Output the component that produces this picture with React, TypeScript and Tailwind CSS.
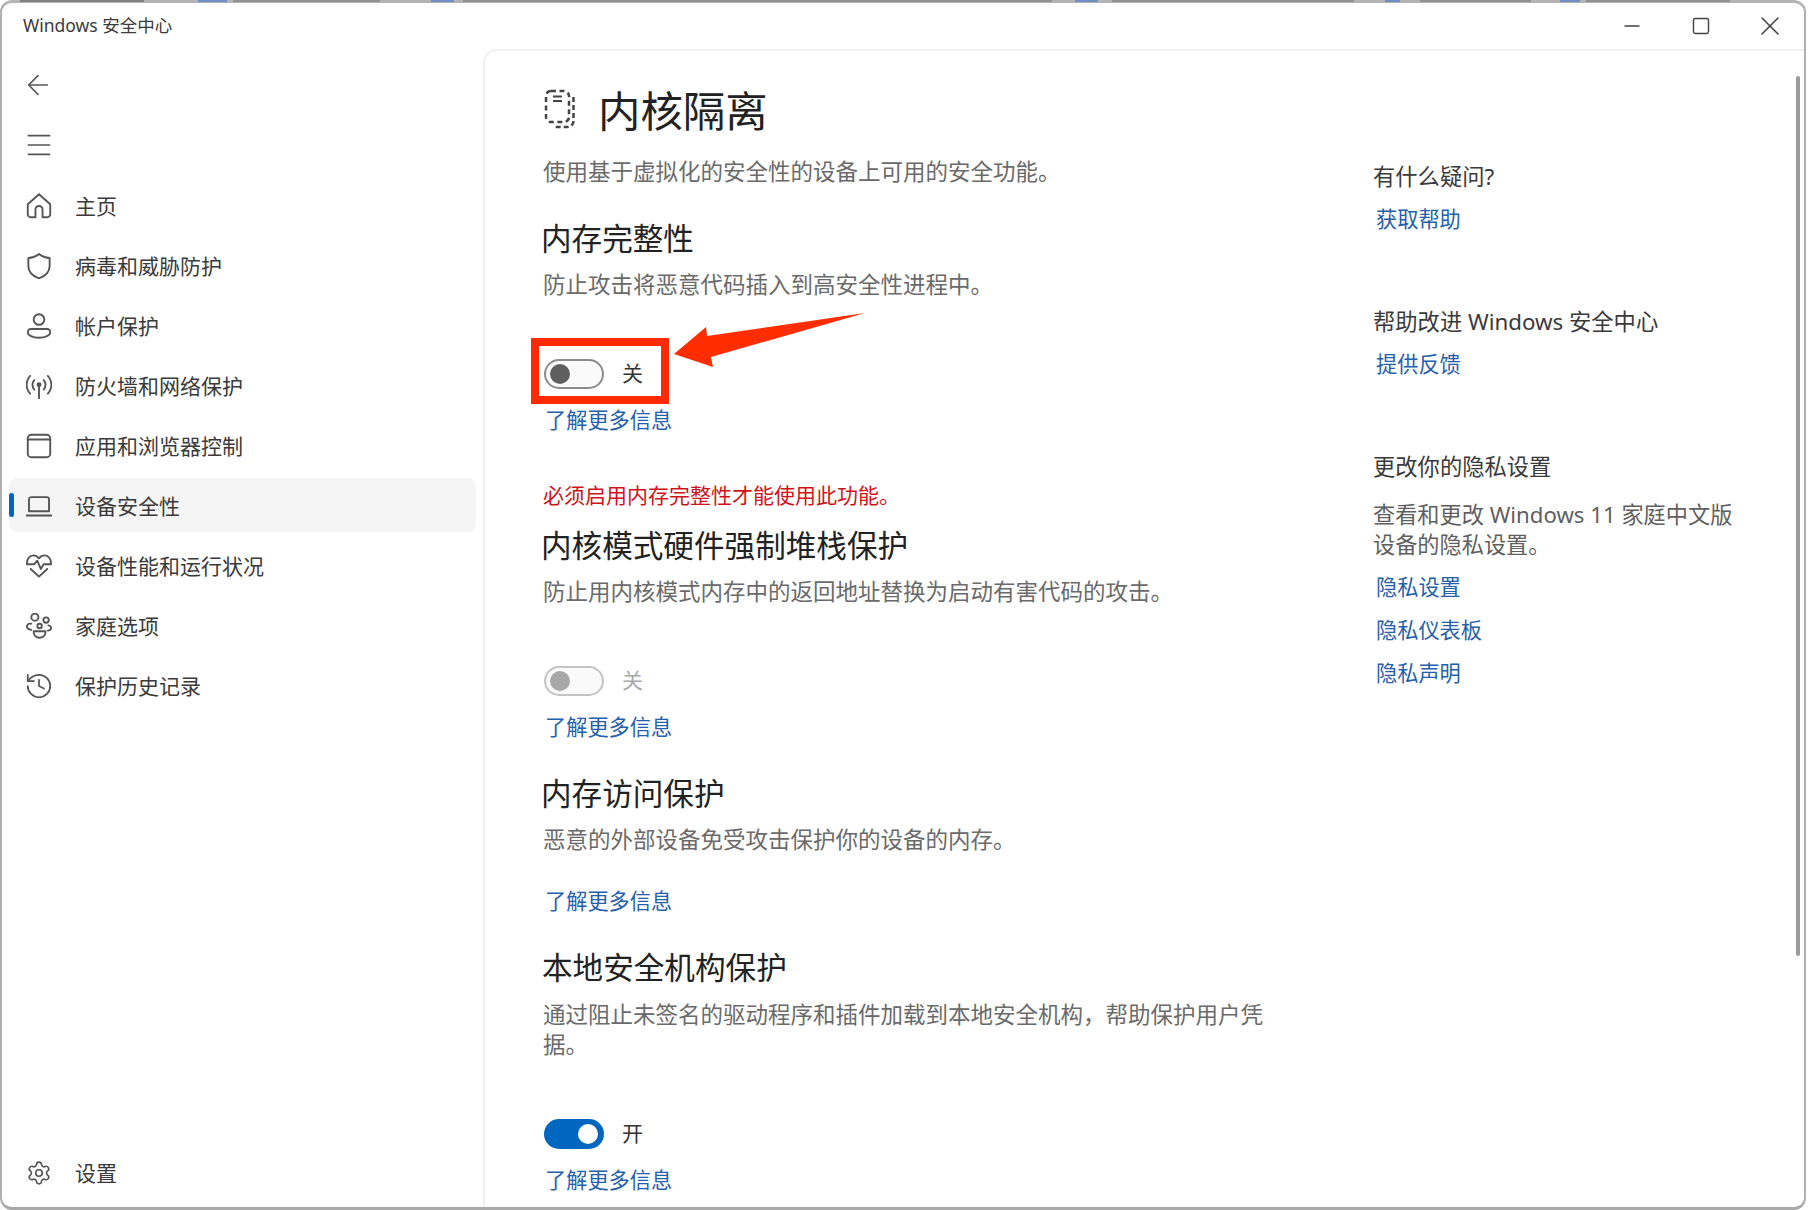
import { ArrowLeft, History, Menu, Settings, Minus, Square, X } from "lucide-react";
import type { ReactNode } from "react";

const ICON = "h-[26px] w-[26px] flex-none text-[#555]";

function Svg({ children }: { children: ReactNode }) {
  return (
    <svg viewBox="1 1 22 22" fill="none" stroke="currentColor" strokeWidth="1.6" strokeLinecap="round" strokeLinejoin="round" className={ICON}>
      {children}
    </svg>
  );
}

const HomeIcon = () => (
  <Svg>
    <path d="M2.500 10.500 12 2l9.500 8.500V19a2.500 2.500 0 0 1-2.500 2.500h-4V15a3 3 0 0 0-6 0v6.500H5A2.500 2.500 0 0 1 2.500 19Z" />
  </Svg>
);
const ShieldIcon = () => (
  <Svg>
    <path d="M12 1.800c2.600 2.200 5.600 3.300 9 3.400V12c0 4.800-3.400 8.400-9 10.400C6.400 20.400 3 16.800 3 12V5.200c3.400-.1 6.400-1.200 9-3.400Z" />
  </Svg>
);
const PersonIcon = () => (
  <Svg>
    <circle cx="12" cy="6.500" r="4.500" />
    <path d="M5 14.500h14a2.500 2.500 0 0 1 2.500 2.500c0 3-4.200 5-9.500 5s-9.500-2-9.500-5A2.500 2.500 0 0 1 5 14.500Z" />
  </Svg>
);
const AntennaIcon = () => (
  <Svg>
    <circle cx="12" cy="11" r="1.300" fill="currentColor" />
    <path d="M12 12.500V22.500" />
    <path d="M8 7a6 6 0 0 0 0 8M16 7a6 6 0 0 1 0 8" />
    <path d="M4.500 3.500a11 11 0 0 0 0 15M19.500 3.500a11 11 0 0 1 0 15" />
  </Svg>
);
const WindowIcon = () => (
  <Svg>
    <rect x="2.500" y="2.500" width="19" height="19" rx="3" />
    <path d="M2.500 6.500h19" />
  </Svg>
);
const LaptopIcon = () => (
  <Svg>
    <path d="M3.500 16.500V6.500a2 2 0 0 1 2-2h13a2 2 0 0 1 2 2v10Z" />
    <path d="M1.500 20h21" />
  </Svg>
);
const HeartIcon = () => (
  <Svg>
    <path d="M5 14.500 12 21l7-6.500" />
    <path d="M2 10.500C1.300 6.500 4 3 7.300 3c2 0 3.600 1 4.700 2.500C13.100 4 14.700 3 16.700 3 20 3 22.700 6.500 22 10.500" />
    <path d="M2 10.500h6l2.500-3 3 7 2.500-4h6" />
  </Svg>
);
const FamilyIcon = () => (
  <Svg>
    <circle cx="8.500" cy="4.500" r="3" />
    <circle cx="18" cy="7" r="2.300" />
    <circle cx="12.500" cy="12" r="1.900" />
    <path d="M5.500 10H4a2.500 2.500 0 0 0-2 3.500c.5 1 1.700 1.600 3.500 1.800" />
    <path d="M20 11.500a2.200 2.200 0 0 1 2 3.200c-.4.600-1.200 1-2.500 1.200" />
    <path d="M7.500 16.500h10c.3 3-2 5.500-5 5.500s-5.300-2.500-5-5.500Z" />
  </Svg>
);

const navItems = [
  { label: "主页", icon: <HomeIcon /> },
  { label: "病毒和威胁防护", icon: <ShieldIcon /> },
  { label: "帐户保护", icon: <PersonIcon /> },
  { label: "防火墙和网络保护", icon: <AntennaIcon /> },
  { label: "应用和浏览器控制", icon: <WindowIcon /> },
  { label: "设备安全性", icon: <LaptopIcon />, active: true },
  { label: "设备性能和运行状况", icon: <HeartIcon /> },
  { label: "家庭选项", icon: <FamilyIcon /> },
  { label: "保护历史记录", icon: <History className="-mx-[2px] h-[30px] w-[30px] flex-none text-[#555]" strokeWidth={1.4} /> },
];

// the window behind shows through in the top edge: cut-off lines of text
const behind = [
  { w: 20, c: "bg-transparent" },
  { w: 124, c: "bg-[#808080]" },
  { w: 54, c: "bg-transparent" },
  { w: 29, c: "bg-[#6f8fc4]" },
  { w: 6, c: "bg-transparent" },
  { w: 147, c: "bg-[#909090]" },
  { w: 51, c: "bg-transparent" },
  { w: 23, c: "bg-[#6f8fc4]" },
  { w: 9, c: "bg-transparent" },
  { w: 589, c: "bg-[#909090]" },
  { w: 23, c: "bg-transparent" },
  { w: 23, c: "bg-[#6f8fc4]" },
  { w: 14, c: "bg-transparent" },
  { w: 242, c: "bg-[#909090]" },
  { w: 31, c: "bg-transparent" },
  { w: 15, c: "bg-[#6f8fc4]" },
  { w: 20, c: "bg-transparent" },
  { w: 111, c: "bg-[#909090]" },
  { w: 29, c: "bg-transparent" },
  { w: 20, c: "bg-[#6f8fc4]" },
  { w: 6, c: "bg-transparent" },
  { w: 144, c: "bg-[#909090]" },
];

function NavRow({ label, icon, active }: { label: string; icon: ReactNode; active?: boolean }) {
  return (
    <div className="flex h-[60px] items-start pb-[5px] pl-[7px] pr-[7px] pt-[1px]">
      <div className={`relative flex h-[54px] w-full items-center gap-[23px] rounded-[8px] pl-[17px] pt-[2px] ${active ? "bg-[#f5f5f5]" : ""}`}>
        {active && <div className="absolute left-0 top-[15px] h-[24px] w-[5px] rounded-full bg-[#0067c0]" />}
        {icon}
        <span className="pt-[2px] text-[21px] text-[#3a3a3a]">{label}</span>
      </div>
    </div>
  );
}

function Toggle({ state }: { state: "off" | "disabled" | "on" }) {
  if (state === "on") {
    return (
      <div className="flex h-[30px] w-[60px] items-center justify-end rounded-full bg-[#0067c0] pr-[6px]">
        <div className="h-[20px] w-[20px] rounded-full bg-white" />
      </div>
    );
  }
  const dim = state === "disabled";
  return (
    <div className={`flex h-[30px] w-[60px] items-center rounded-full border-2 bg-[#fafafa] pl-[4px] ${dim ? "border-[#c4c4c4]" : "border-[#8c8c8c]"}`}>
      <div className={`h-[20px] w-[20px] rounded-full ${dim ? "bg-[#a8a8a8]" : "bg-[#5f5f5f]"}`} />
    </div>
  );
}

function ToggleRow({ state, children }: { state: "off" | "disabled" | "on"; children?: ReactNode }) {
  return (
    <div className="relative mt-[59px] flex h-[30px] items-center gap-[18px] pl-[2px]">
      <Toggle state={state} />
      <span className={`text-[21px] ${state === "disabled" ? "text-[#a8a8a8]" : "text-[#333]"}`}>{state === "on" ? "开" : "关"}</span>
      {children}
    </div>
  );
}

const A = ({ children, className }: { children: ReactNode; className: string }) => (
  <div className={`h-[30px] pl-[3px] text-[21.200px] leading-[30px] text-[#2360ad] ${className}`}>{children}</div>
);
const H2 = ({ children, className }: { children: ReactNode; className: string }) => (
  <h2 className={`h-[40px] text-[30.600px] leading-[40px] text-[#222] ${className}`}>{children}</h2>
);
const Desc = ({ children, className }: { children: ReactNode; className: string }) => (
  <p className={`w-[730px] pl-[1px] text-[22.500px] leading-[30px] text-[#6a6a6a] ${className}`}>{children}</p>
);
const H3 = ({ children, className }: { children: ReactNode; className: string }) => (
  <h3 className={`h-[30px] text-[22.300px] leading-[30px] text-[#3a3a3a] ${className}`}>{children}</h3>
);

export default function App() {
  return (
    <div className="relative h-[1210px] w-[1808px] overflow-hidden bg-white font-['Noto_Sans','Noto_Sans_CJK_SC',sans-serif]">
      <div className="flex h-[1210px] w-[1806px] flex-col overflow-hidden rounded-[12px] border-x-2 border-b-[3px] border-t-[3px] border-x-[#b0b0b0] border-b-[#a8a8a8] border-t-[#b4b4b4] bg-white">
        {/* title bar */}
        <div className="flex h-[46px] flex-none items-center justify-between pl-[21px] text-[17.500px] text-[#3a3a3a]">
          <span className="-translate-y-[1px]">Windows 安全中心</span>
          <div className="flex items-center text-[#444]">
            <div className="flex w-[69px] justify-center">
              <Minus className="h-6 w-6" strokeWidth={1.5} />
            </div>
            <div className="flex w-[69px] justify-center">
              <Square className="h-[20px] w-[20px]" strokeWidth={1.7} />
            </div>
            <div className="flex w-[69px] justify-center">
              <X className="h-[32px] w-[32px]" strokeWidth={1.2} />
            </div>
          </div>
        </div>

        <div className="flex min-h-0 flex-1">
          {/* sidebar */}
          <aside className="flex w-[481px] flex-none flex-col pt-[6px]">
            <div className="flex h-[60px] items-center pl-[20px]">
              <ArrowLeft className="h-[32px] w-[32px] text-[#555]" strokeWidth={1.2} />
            </div>
            <div className="flex h-[60px] items-center pl-[21px]">
              <Menu className="h-[32px] w-[32px] text-[#555]" strokeWidth={1.2} />
            </div>
            <nav className="mt-[2px]">
              {navItems.map((n) => (
                <NavRow key={n.label} {...n} />
              ))}
            </nav>
            <div className="mb-[3px] mt-auto">
              <NavRow label="设置" icon={<Settings className={ICON} strokeWidth={1.5} />} />
            </div>
          </aside>

          {/* main panel */}
          <main className="relative flex min-w-0 flex-1 rounded-tl-[14px] border-l-2 border-t-2 border-[#f0f0f0] pl-[57px]">
            <div className="absolute right-[4px] top-[25px] h-[880px] w-[4px] rounded-full bg-[#9c9c9c]" />

            <div className="w-[831px] flex-none">
              <div className="mt-[30px] flex h-[60px] items-center gap-[22px] pl-[2px]">
                <svg viewBox="0 0 32 40" fill="none" stroke="#444" strokeWidth="2.500" className="h-[40px] w-[32px] -translate-y-[2px]">
                  <rect x="2" y="2" width="23" height="31" rx="5" strokeDasharray="5 3.500" />
                  <path d="M29.500 8v24a6 6 0 0 1-6 6H11" strokeDasharray="5 3" />
                  <path d="M9 7.500h9M9 12h9" strokeWidth="2" />
                </svg>
                <h1 className="text-[42.400px] leading-[60px] text-[#222]">内核隔离</h1>
              </div>
              <Desc className="mt-[16px]">使用基于虚拟化的安全性的设备上可用的安全功能。</Desc>

              <H2 className="-ml-[1px] mt-[31px]">内存完整性</H2>
              <Desc className="mt-[12px]">防止攻击将恶意代码插入到高安全性进程中。</Desc>
              <ToggleRow state="off">
                <div className="absolute -top-[21px] left-[-11px] h-[66px] w-[138px] border-[8px] border-[#ff2a00]" />
                <svg viewBox="0 0 192 55" className="absolute -top-[46px] left-[132px] h-[55px] w-[192px]">
                  <polygon points="0,41 32,14 33,23 191,0 37,44 39,54" fill="#ff2d00" />
                </svg>
              </ToggleRow>
              <A className="mt-[16px]">了解更多信息</A>
              <p className="mt-[45px] h-[30px] pl-[1px] text-[21px] leading-[30px] text-[#d0121b]">必须启用内存完整性才能使用此功能。</p>

              <H2 className="-ml-[1px] mt-[15px]">内核模式硬件强制堆栈保护</H2>
              <Desc className="mt-[12px]">防止用内核模式内存中的返回地址替换为启动有害代码的攻击。</Desc>
              <ToggleRow state="disabled" />
              <A className="mt-[16px]">了解更多信息</A>

              <H2 className="-ml-[1px] mt-[31px]">内存访问保护</H2>
              <Desc className="mt-[12px]">恶意的外部设备免受攻击保护你的设备的内存。</Desc>
              <A className="mt-[31px]">了解更多信息</A>

              <H2 className="mt-[31px]">本地安全机构保护</H2>
              <Desc className="mt-[13px]">通过阻止未签名的驱动程序和插件加载到本地安全机构，帮助保护用户凭据。</Desc>
              <ToggleRow state="on" />
              <A className="mt-[16px]">了解更多信息</A>
            </div>

            <div className="flex-1 pt-[111px]">
              <H3 className="">有什么疑问?</H3>
              <A className="mt-[12px]">获取帮助</A>
              <H3 className="mt-[73px]">帮助改进 Windows 安全中心</H3>
              <A className="mt-[12px]">提供反馈</A>
              <H3 className="mt-[73px]">更改你的隐私设置</H3>
              <p className="mt-[18px] text-[22.200px] leading-[30px] text-[#5f5f5f]">
                查看和更改 Windows 11 家庭中文版
                <br />
                设备的隐私设置。
              </p>
              <A className="mt-[12px]">隐私设置</A>
              <A className="mt-[13px]">隐私仪表板</A>
              <A className="mt-[13px]">隐私声明</A>
            </div>
          </main>
        </div>
      </div>

      <div className="absolute left-0 top-0 flex h-[2px]">
        {behind.map((b, i) => (
          <div key={i} className={b.c} style={{ width: b.w }} />
        ))}
      </div>
    </div>
  );
}
